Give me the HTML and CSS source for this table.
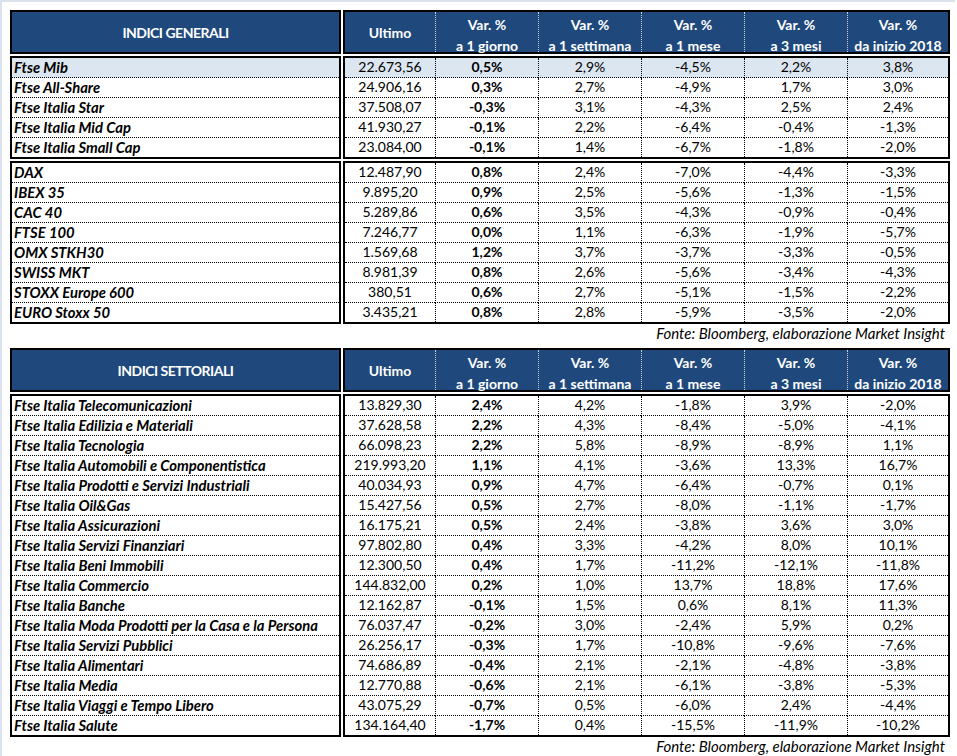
FILE: index.html
```html
<!DOCTYPE html>
<html lang="it">
<head>
<meta charset="utf-8">
<title>Indici</title>
<link rel="stylesheet" href="styles.css">
</head>
<body>
<div class="page">

  <section class="table">
    <div class="band">
      <div class="box names head"><div class="title">INDICI GENERALI</div></div>
      <div class="box data head">
        <div class="single">Ultimo</div>
        <div>Var. %<br>a 1 giorno</div>
        <div>Var. %<br>a 1 settimana</div>
        <div>Var. %<br>a 1 mese</div>
        <div>Var. %<br>a 3 mesi</div>
        <div>Var. %<br>da inizio 2018</div>
      </div>
    </div>

    <div class="band">
      <div class="box names hl">
        <div>Ftse Mib</div>
        <div>Ftse All-Share</div>
        <div>Ftse Italia Star</div>
        <div>Ftse Italia Mid Cap</div>
        <div>Ftse Italia Small Cap</div>
      </div>
      <div class="box data body hl">
        <div>22.673,56</div><div>0,5%</div><div>2,9%</div><div>-4,5%</div><div>2,2%</div><div>3,8%</div>
        <div>24.906,16</div><div>0,3%</div><div>2,7%</div><div>-4,9%</div><div>1,7%</div><div>3,0%</div>
        <div>37.508,07</div><div>-0,3%</div><div>3,1%</div><div>-4,3%</div><div>2,5%</div><div>2,4%</div>
        <div>41.930,27</div><div>-0,1%</div><div>2,2%</div><div>-6,4%</div><div>-0,4%</div><div>-1,3%</div>
        <div>23.084,00</div><div>-0,1%</div><div>1,4%</div><div>-6,7%</div><div>-1,8%</div><div>-2,0%</div>
      </div>
    </div>

    <div class="band">
      <div class="box names">
        <div>DAX</div>
        <div>IBEX 35</div>
        <div>CAC 40</div>
        <div>FTSE 100</div>
        <div>OMX STKH30</div>
        <div>SWISS MKT</div>
        <div>STOXX Europe 600</div>
        <div>EURO Stoxx 50</div>
      </div>
      <div class="box data body">
        <div>12.487,90</div><div>0,8%</div><div>2,4%</div><div>-7,0%</div><div>-4,4%</div><div>-3,3%</div>
        <div>9.895,20</div><div>0,9%</div><div>2,5%</div><div>-5,6%</div><div>-1,3%</div><div>-1,5%</div>
        <div>5.289,86</div><div>0,6%</div><div>3,5%</div><div>-4,3%</div><div>-0,9%</div><div>-0,4%</div>
        <div>7.246,77</div><div>0,0%</div><div>1,1%</div><div>-6,3%</div><div>-1,9%</div><div>-5,7%</div>
        <div>1.569,68</div><div>1,2%</div><div>3,7%</div><div>-3,7%</div><div>-3,3%</div><div>-0,5%</div>
        <div>8.981,39</div><div>0,8%</div><div>2,6%</div><div>-5,6%</div><div>-3,4%</div><div>-4,3%</div>
        <div>380,51</div><div>0,6%</div><div>2,7%</div><div>-5,1%</div><div>-1,5%</div><div>-2,2%</div>
        <div>3.435,21</div><div>0,8%</div><div>2,8%</div><div>-5,9%</div><div>-3,5%</div><div>-2,0%</div>
      </div>
    </div>
    <p class="source">Fonte: Bloomberg, elaborazione Market Insight</p>
  </section>

  <section class="table">
    <div class="band">
      <div class="box names head"><div class="title">INDICI SETTORIALI</div></div>
      <div class="box data head">
        <div class="single">Ultimo</div>
        <div>Var. %<br>a 1 giorno</div>
        <div>Var. %<br>a 1 settimana</div>
        <div>Var. %<br>a 1 mese</div>
        <div>Var. %<br>a 3 mesi</div>
        <div>Var. %<br>da inizio 2018</div>
      </div>
    </div>

    <div class="band">
      <div class="box names">
        <div>Ftse Italia Telecomunicazioni</div>
        <div>Ftse Italia Edilizia e Materiali</div>
        <div>Ftse Italia Tecnologia</div>
        <div>Ftse Italia Automobili e Componentistica</div>
        <div>Ftse Italia Prodotti e Servizi Industriali</div>
        <div>Ftse Italia Oil&amp;Gas</div>
        <div>Ftse Italia Assicurazioni</div>
        <div>Ftse Italia Servizi Finanziari</div>
        <div>Ftse Italia Beni Immobili</div>
        <div>Ftse Italia Commercio</div>
        <div>Ftse Italia Banche</div>
        <div>Ftse Italia Moda Prodotti per la Casa e la Persona</div>
        <div>Ftse Italia Servizi Pubblici</div>
        <div>Ftse Italia Alimentari</div>
        <div>Ftse Italia Media</div>
        <div>Ftse Italia Viaggi e Tempo Libero</div>
        <div>Ftse Italia Salute</div>
      </div>
      <div class="box data body">
        <div>13.829,30</div><div>2,4%</div><div>4,2%</div><div>-1,8%</div><div>3,9%</div><div>-2,0%</div>
        <div>37.628,58</div><div>2,2%</div><div>4,3%</div><div>-8,4%</div><div>-5,0%</div><div>-4,1%</div>
        <div>66.098,23</div><div>2,2%</div><div>5,8%</div><div>-8,9%</div><div>-8,9%</div><div>1,1%</div>
        <div>219.993,20</div><div>1,1%</div><div>4,1%</div><div>-3,6%</div><div>13,3%</div><div>16,7%</div>
        <div>40.034,93</div><div>0,9%</div><div>4,7%</div><div>-6,4%</div><div>-0,7%</div><div>0,1%</div>
        <div>15.427,56</div><div>0,5%</div><div>2,7%</div><div>-8,0%</div><div>-1,1%</div><div>-1,7%</div>
        <div>16.175,21</div><div>0,5%</div><div>2,4%</div><div>-3,8%</div><div>3,6%</div><div>3,0%</div>
        <div>97.802,80</div><div>0,4%</div><div>3,3%</div><div>-4,2%</div><div>8,0%</div><div>10,1%</div>
        <div>12.300,50</div><div>0,4%</div><div>1,7%</div><div>-11,2%</div><div>-12,1%</div><div>-11,8%</div>
        <div>144.832,00</div><div>0,2%</div><div>1,0%</div><div>13,7%</div><div>18,8%</div><div>17,6%</div>
        <div>12.162,87</div><div>-0,1%</div><div>1,5%</div><div>0,6%</div><div>8,1%</div><div>11,3%</div>
        <div>76.037,47</div><div>-0,2%</div><div>3,0%</div><div>-2,4%</div><div>5,9%</div><div>0,2%</div>
        <div>26.256,17</div><div>-0,3%</div><div>1,7%</div><div>-10,8%</div><div>-9,6%</div><div>-7,6%</div>
        <div>74.686,89</div><div>-0,4%</div><div>2,1%</div><div>-2,1%</div><div>-4,8%</div><div>-3,8%</div>
        <div>12.770,88</div><div>-0,6%</div><div>2,1%</div><div>-6,1%</div><div>-3,8%</div><div>-5,3%</div>
        <div>43.075,29</div><div>-0,7%</div><div>0,5%</div><div>-6,0%</div><div>2,4%</div><div>-4,4%</div>
        <div>134.164,40</div><div>-1,7%</div><div>0,4%</div><div>-15,5%</div><div>-11,9%</div><div>-10,2%</div>
      </div>
    </div>
    <p class="source">Fonte: Bloomberg, elaborazione Market Insight</p>
  </section>

</div>
</body>
</html>
```

FILE: styles.css
```css
html, body {
  margin: 0;
  padding: 0;
  background: #ffffff;
}

body {
  font-family: "Lato", "Open Sans", sans-serif;
  font-size: 14px;
  color: #000;
}

.page {
  width: 955px;
  min-height: 754px;
  border-top: 2px solid #dae2ed;
  border-left: 2px solid #dae2ed;
  padding: 8px 0 0 8px;
  box-sizing: border-box;
}

.table {
  width: 940px;
}

.band {
  display: flex;
  gap: 2px;
  margin-bottom: 2px;
}

.box {
  border: 2px solid #000;
  box-sizing: border-box;
}

.names {
  width: 331px;
}

.data {
  width: 607px;
  display: grid;
  grid-template-columns: 90px 103px 103px 103px 103px 101px;
}

/* header */
.head {
  background: #1f497d;
  color: #fff;
  font-weight: 700;
  height: 44px;
}

.names.head {
  display: flex;
  align-items: center;
  justify-content: center;
  padding-top: 2px;
}

.data.head > div {
  text-align: center;
  line-height: 21px;
  padding-top: 2px;
  height: 40px;
  box-sizing: border-box;
}

.data.head > div + div {
  border-left: 1px dotted #c9d3e0;
}

.data.head > .single {
  display: flex;
  align-items: center;
  justify-content: center;
  padding-top: 1px;
}

/* body rows */
.names > div {
  height: 19px;
  line-height: 18px;
  padding-left: 2px;
  font-size: 14.8px;
  font-weight: 700;
  font-style: italic;
  border-bottom: 1px dotted #000;
  white-space: nowrap;
}

.names > div:last-child {
  border-bottom: 0;
}

.names.head > .title {
  height: auto;
  border: 0;
  padding: 0;
  font-size: 14px;
  font-style: normal;
  line-height: 20px;
  letter-spacing: -0.5px;
}

.data.body > div {
  height: 19px;
  line-height: 18px;
  text-align: center;
  border-bottom: 1px dotted #000;
}

.data.body > div:not(:nth-child(6n+1)) {
  border-left: 1px dotted #000;
}

.data.body > div:nth-child(6n+2) {
  font-weight: 700;
}

.data.body > div:nth-last-child(-n+6) {
  border-bottom: 0;
}

/* highlighted first row */
.names.hl > div:first-child,
.data.hl > div:nth-child(-n+6) {
  background: #dce6f1;
}

.source {
  margin: -2px 0 4px 0;
  height: 20px;
  line-height: 18px;
  text-align: right;
  padding-right: 5px;
  font-size: 15px;
  font-style: italic;
}
```
